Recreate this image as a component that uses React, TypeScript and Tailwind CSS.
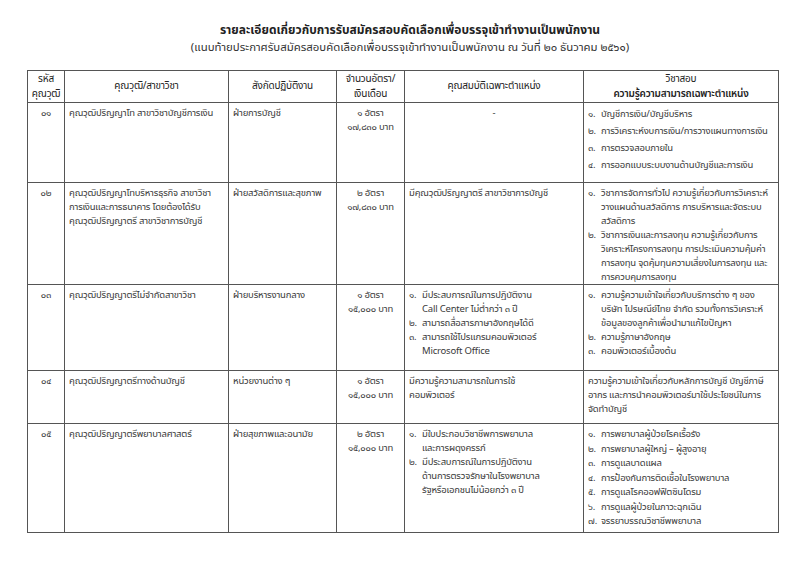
import React from "react";

const font = { fontFamily: '"Noto Sans Thai", "Noto Sans", sans-serif' };

type Item = { n?: string; lines: string[] };

function List({ items }: { items: Item[] }) {
  return (
    <div className="flex flex-col">
      {items.map((it, i) => (
        <div key={i} className="flex">
          {it.n !== undefined && <span className="w-[13px] shrink-0">{it.n}</span>}
          <div className="flex flex-col">
            {it.lines.map((l, j) => (
              <span key={j} className="whitespace-nowrap">{l}</span>
            ))}
          </div>
        </div>
      ))}
    </div>
  );
}

function Lines({ lines }: { lines: string[] }) {
  return (
    <div className="flex flex-col">
      {lines.map((l, i) => (
        <span key={i} className="whitespace-nowrap">{l}</span>
      ))}
    </div>
  );
}

export default function App() {
  const td = "border border-[#555] align-top px-[4px] pt-[3px] overflow-hidden";
  const th = "border border-[#555] font-normal text-center align-middle";
  return (
    <div className="w-[800px] h-[566px] bg-white text-[#3a3a3a] overflow-hidden" style={font}>
      <div className="flex flex-col items-center pt-[22px] pl-[20px]">
        <div className="text-[12px] font-bold leading-[17px] text-[#222]">
          รายละเอียดเกี่ยวกับการรับสมัครสอบคัดเลือกเพื่อบรรจุเข้าทำงานเป็นพนักงาน
        </div>
        <div className="text-[11.4px] leading-[17px] text-[#333]">
          (แนบท้ายประกาศรับสมัครสอบคัดเลือกเพื่อบรรจุเข้าทำงานเป็นพนักงาน ณ วันที่ ๒๐ ธันวาคม ๒๕๖๑)
        </div>
      </div>
      <table className="ml-[27px] mt-[14px] w-[751px] table-fixed border-collapse text-[9.5px] leading-[14px] tracking-[-0.2px]">
        <colgroup>
          <col className="w-[37px]" />
          <col className="w-[164px]" />
          <col className="w-[108px]" />
          <col className="w-[68px]" />
          <col className="w-[179px]" />
          <col className="w-[195px]" />
        </colgroup>
        <thead>
          <tr className="h-[32px] text-[10px] leading-[15px] text-[#222]">
            <th className={th}>รหัส<br />คุณวุฒิ</th>
            <th className={th}>คุณวุฒิ/สาขาวิชา</th>
            <th className={th}>สังกัดปฏิบัติงาน</th>
            <th className={th}>จำนวนอัตรา/<br />เงินเดือน</th>
            <th className={th}>คุณสมบัติเฉพาะตำแหน่ง</th>
            <th className={th}>วิชาสอบ<br /><span className="font-semibold">ความรู้ความสามารถเฉพาะตำแหน่ง</span></th>
          </tr>
        </thead>
        <tbody>
          <tr className="h-[80px]">
            <td className={td + " text-center"}>๐๑</td>
            <td className={td}><Lines lines={["คุณวุฒิปริญญาโท สาขาวิชาบัญชีการเงิน"]} /></td>
            <td className={td}>ฝ่ายการบัญชี</td>
            <td className={td + " text-center"}>๑ อัตรา<br />๑๗,๘๓๐ บาท</td>
            <td className={td + " text-center"}>-</td>
            <td className={td + " leading-[17px] pt-[1px]"}>
              <List items={[
                { n: "๑.", lines: ["บัญชีการเงิน/บัญชีบริหาร"] },
                { n: "๒.", lines: ["การวิเคราะห์งบการเงิน/การวางแผนทางการเงิน"] },
                { n: "๓.", lines: ["การตรวจสอบภายใน"] },
                { n: "๔.", lines: ["การออกแบบระบบงานด้านบัญชีและการเงิน"] },
              ]} />
            </td>
          </tr>
          <tr className="h-[100px]">
            <td className={td + " text-center"}>๐๒</td>
            <td className={td}>
              <Lines lines={["คุณวุฒิปริญญาโทบริหารธุรกิจ สาขาวิชา", "การเงินและการธนาคาร โดยต้องได้รับ", "คุณวุฒิปริญญาตรี สาขาวิชาการบัญชี"]} />
            </td>
            <td className={td}>ฝ่ายสวัสดิการและสุขภาพ</td>
            <td className={td + " text-center"}>๒ อัตรา<br />๑๗,๘๓๐ บาท</td>
            <td className={td}>มีคุณวุฒิปริญญาตรี สาขาวิชาการบัญชี</td>
            <td className={td}>
              <List items={[
                { n: "๑.", lines: ["วิชาการจัดการทั่วไป ความรู้เกี่ยวกับการวิเคราะห์", "วางแผนด้านสวัสดิการ การบริหารและจัดระบบ", "สวัสดิการ"] },
                { n: "๒.", lines: ["วิชาการเงินและการลงทุน ความรู้เกี่ยวกับการ", "วิเคราะห์โครงการลงทุน การประเมินความคุ้มค่า", "การลงทุน จุดคุ้มทุนความเสี่ยงในการลงทุน และ", "การควบคุมการลงทุน"] },
              ]} />
            </td>
          </tr>
          <tr className="h-[86px]">
            <td className={td + " text-center"}>๐๓</td>
            <td className={td}>คุณวุฒิปริญญาตรีไม่จำกัดสาขาวิชา</td>
            <td className={td}>ฝ่ายบริหารงานกลาง</td>
            <td className={td + " text-center"}>๑ อัตรา<br />๑๕,๐๐๐ บาท</td>
            <td className={td}>
              <List items={[
                { n: "๑.", lines: ["มีประสบการณ์ในการปฏิบัติงาน", "Call Center ไม่ต่ำกว่า ๓ ปี"] },
                { n: "๒.", lines: ["สามารถสื่อสารภาษาอังกฤษได้ดี"] },
                { n: "๓.", lines: ["สามารถใช้โปรแกรมคอมพิวเตอร์", "Microsoft Office"] },
              ]} />
            </td>
            <td className={td}>
              <List items={[
                { n: "๑.", lines: ["ความรู้ความเข้าใจเกี่ยวกับบริการต่าง ๆ ของ", "บริษัท ไปรษณีย์ไทย จำกัด รวมทั้งการวิเคราะห์", "ข้อมูลของลูกค้าเพื่อนำมาแก้ไขปัญหา"] },
                { n: "๒.", lines: ["ความรู้ภาษาอังกฤษ"] },
                { n: "๓.", lines: ["คอมพิวเตอร์เบื้องต้น"] },
              ]} />
            </td>
          </tr>
          <tr className="h-[53px]">
            <td className={td + " text-center"}>๐๔</td>
            <td className={td}>คุณวุฒิปริญญาตรีทางด้านบัญชี</td>
            <td className={td}>หน่วยงานต่าง ๆ</td>
            <td className={td + " text-center"}>๑ อัตรา<br />๑๕,๐๐๐ บาท</td>
            <td className={td}><Lines lines={["มีความรู้ความสามารถในการใช้", "คอมพิวเตอร์"]} /></td>
            <td className={td}>
              <Lines lines={["ความรู้ความเข้าใจเกี่ยวกับหลักการบัญชี บัญชีภาษี", "อากร และการนำคอมพิวเตอร์มาใช้ประโยชน์ในการ", "จัดทำบัญชี"]} />
            </td>
          </tr>
          <tr className="h-[109px]">
            <td className={td + " text-center"}>๐๕</td>
            <td className={td}>คุณวุฒิปริญญาตรีพยาบาลศาสตร์</td>
            <td className={td}>ฝ่ายสุขภาพและอนามัย</td>
            <td className={td + " text-center"}>๒ อัตรา<br />๑๕,๐๐๐ บาท</td>
            <td className={td}>
              <List items={[
                { n: "๑.", lines: ["มีใบประกอบวิชาชีพการพยาบาล", "และการผดุงครรภ์"] },
                { n: "๒.", lines: ["มีประสบการณ์ในการปฏิบัติงาน", "ด้านการตรวจรักษาในโรงพยาบาล", "รัฐหรือเอกชนไม่น้อยกว่า ๓ ปี"] },
              ]} />
            </td>
            <td className={td + " leading-[14.5px]"}>
              <List items={[
                { n: "๑.", lines: ["การพยาบาลผู้ป่วยโรคเรื้อรัง"] },
                { n: "๒.", lines: ["การพยาบาลผู้ใหญ่ – ผู้สูงอายุ"] },
                { n: "๓.", lines: ["การดูแลบาดแผล"] },
                { n: "๔.", lines: ["การป้องกันการติดเชื้อในโรงพยาบาล"] },
                { n: "๕.", lines: ["การดูแลโรคออฟฟิตซินโดรม"] },
                { n: "๖.", lines: ["การดูแลผู้ป่วยในภาวะฉุกเฉิน"] },
                { n: "๗.", lines: ["จรรยาบรรณวิชาชีพพยาบาล"] },
              ]} />
            </td>
          </tr>
        </tbody>
      </table>
    </div>
  );
}
